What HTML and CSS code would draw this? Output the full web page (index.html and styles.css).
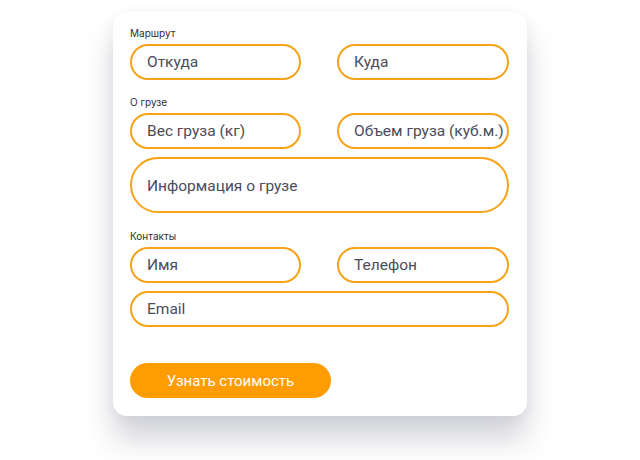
FILE: index.html
```html
<!DOCTYPE html>
<html>
<head>
    <title>Расчет стоимости</title>
    <meta name="viewport" content="width=device-width, initial-scale=1">
    <link rel="stylesheet" href="styles.css">
</head>
<body>
    <form class="card" onsubmit="return false">
        <div class="group">
            <div class="label">Маршрут</div>
            <div class="row">
                <input class="field" type="text" placeholder="Откуда">
                <input class="field" type="text" placeholder="Куда">
            </div>
        </div>

        <div class="group">
            <div class="label">О грузе</div>
            <div class="row">
                <input class="field" type="text" placeholder="Вес груза (кг)">
                <input class="field" type="text" placeholder="Объем груза (куб.м.)">
            </div>
            <textarea class="field area" placeholder="Информация о грузе"></textarea>
        </div>

        <div class="group">
            <div class="label">Контакты</div>
            <div class="row">
                <input class="field" type="text" placeholder="Имя">
                <input class="field" type="text" placeholder="Телефон">
            </div>
            <input class="field" type="email" placeholder="Email">
        </div>

        <button class="send" type="submit">Узнать стоимость</button>
    </form>
</body>
</html>
```

FILE: styles.css
```css
body { margin: 0; padding: 12px 0 45px; background: #fff; font-family: Roboto, "Noto Sans", sans-serif; }

/* Card */
.card { width: 414px; box-sizing: border-box; margin: 0 auto; padding: 14px 18px 18px 17px; background: #fff; border-radius: 14px; box-shadow: 0 24px 30px rgba(40,45,70,0.2), 0 2px 14px rgba(40,45,70,0.06); display: flex; flex-direction: column; }
.group { display: flex; flex-direction: column; gap: 8px; margin-bottom: 15px; }
.group:nth-child(2) { margin-bottom: 16px; }
.group:nth-child(3) { margin-bottom: 35px; }
.label { font-family: Inter, "Open Sans", sans-serif; font-size: 10px; line-height: 14px; color: #2e2e36; margin-bottom: -4px; }
.row { display: grid; grid-template-columns: 171px 172px; justify-content: space-between; }

/* Inputs */
.field { box-sizing: border-box; width: 100%; height: 36px; margin: 0; padding: 0 2px 0 15px; border: 2px solid #f6a318; border-radius: 20px; background: #fff; font-family: Roboto, "Noto Sans", sans-serif; font-size: 15.5px; color: #4b4b5c; outline: none; }
.field::placeholder { color: #4b4b5c; opacity: 1; }
.area { height: 56px; border-radius: 28px; padding: 17px 15px 0; resize: none; line-height: 20px; overflow: hidden; }

/* Button */
.send { width: 201px; height: 35px; margin-top: 1px; border: none; border-radius: 18px; background: #ff9c00; color: #fff; font-family: Roboto, "Noto Sans", sans-serif; font-size: 15px; cursor: pointer; }
```
